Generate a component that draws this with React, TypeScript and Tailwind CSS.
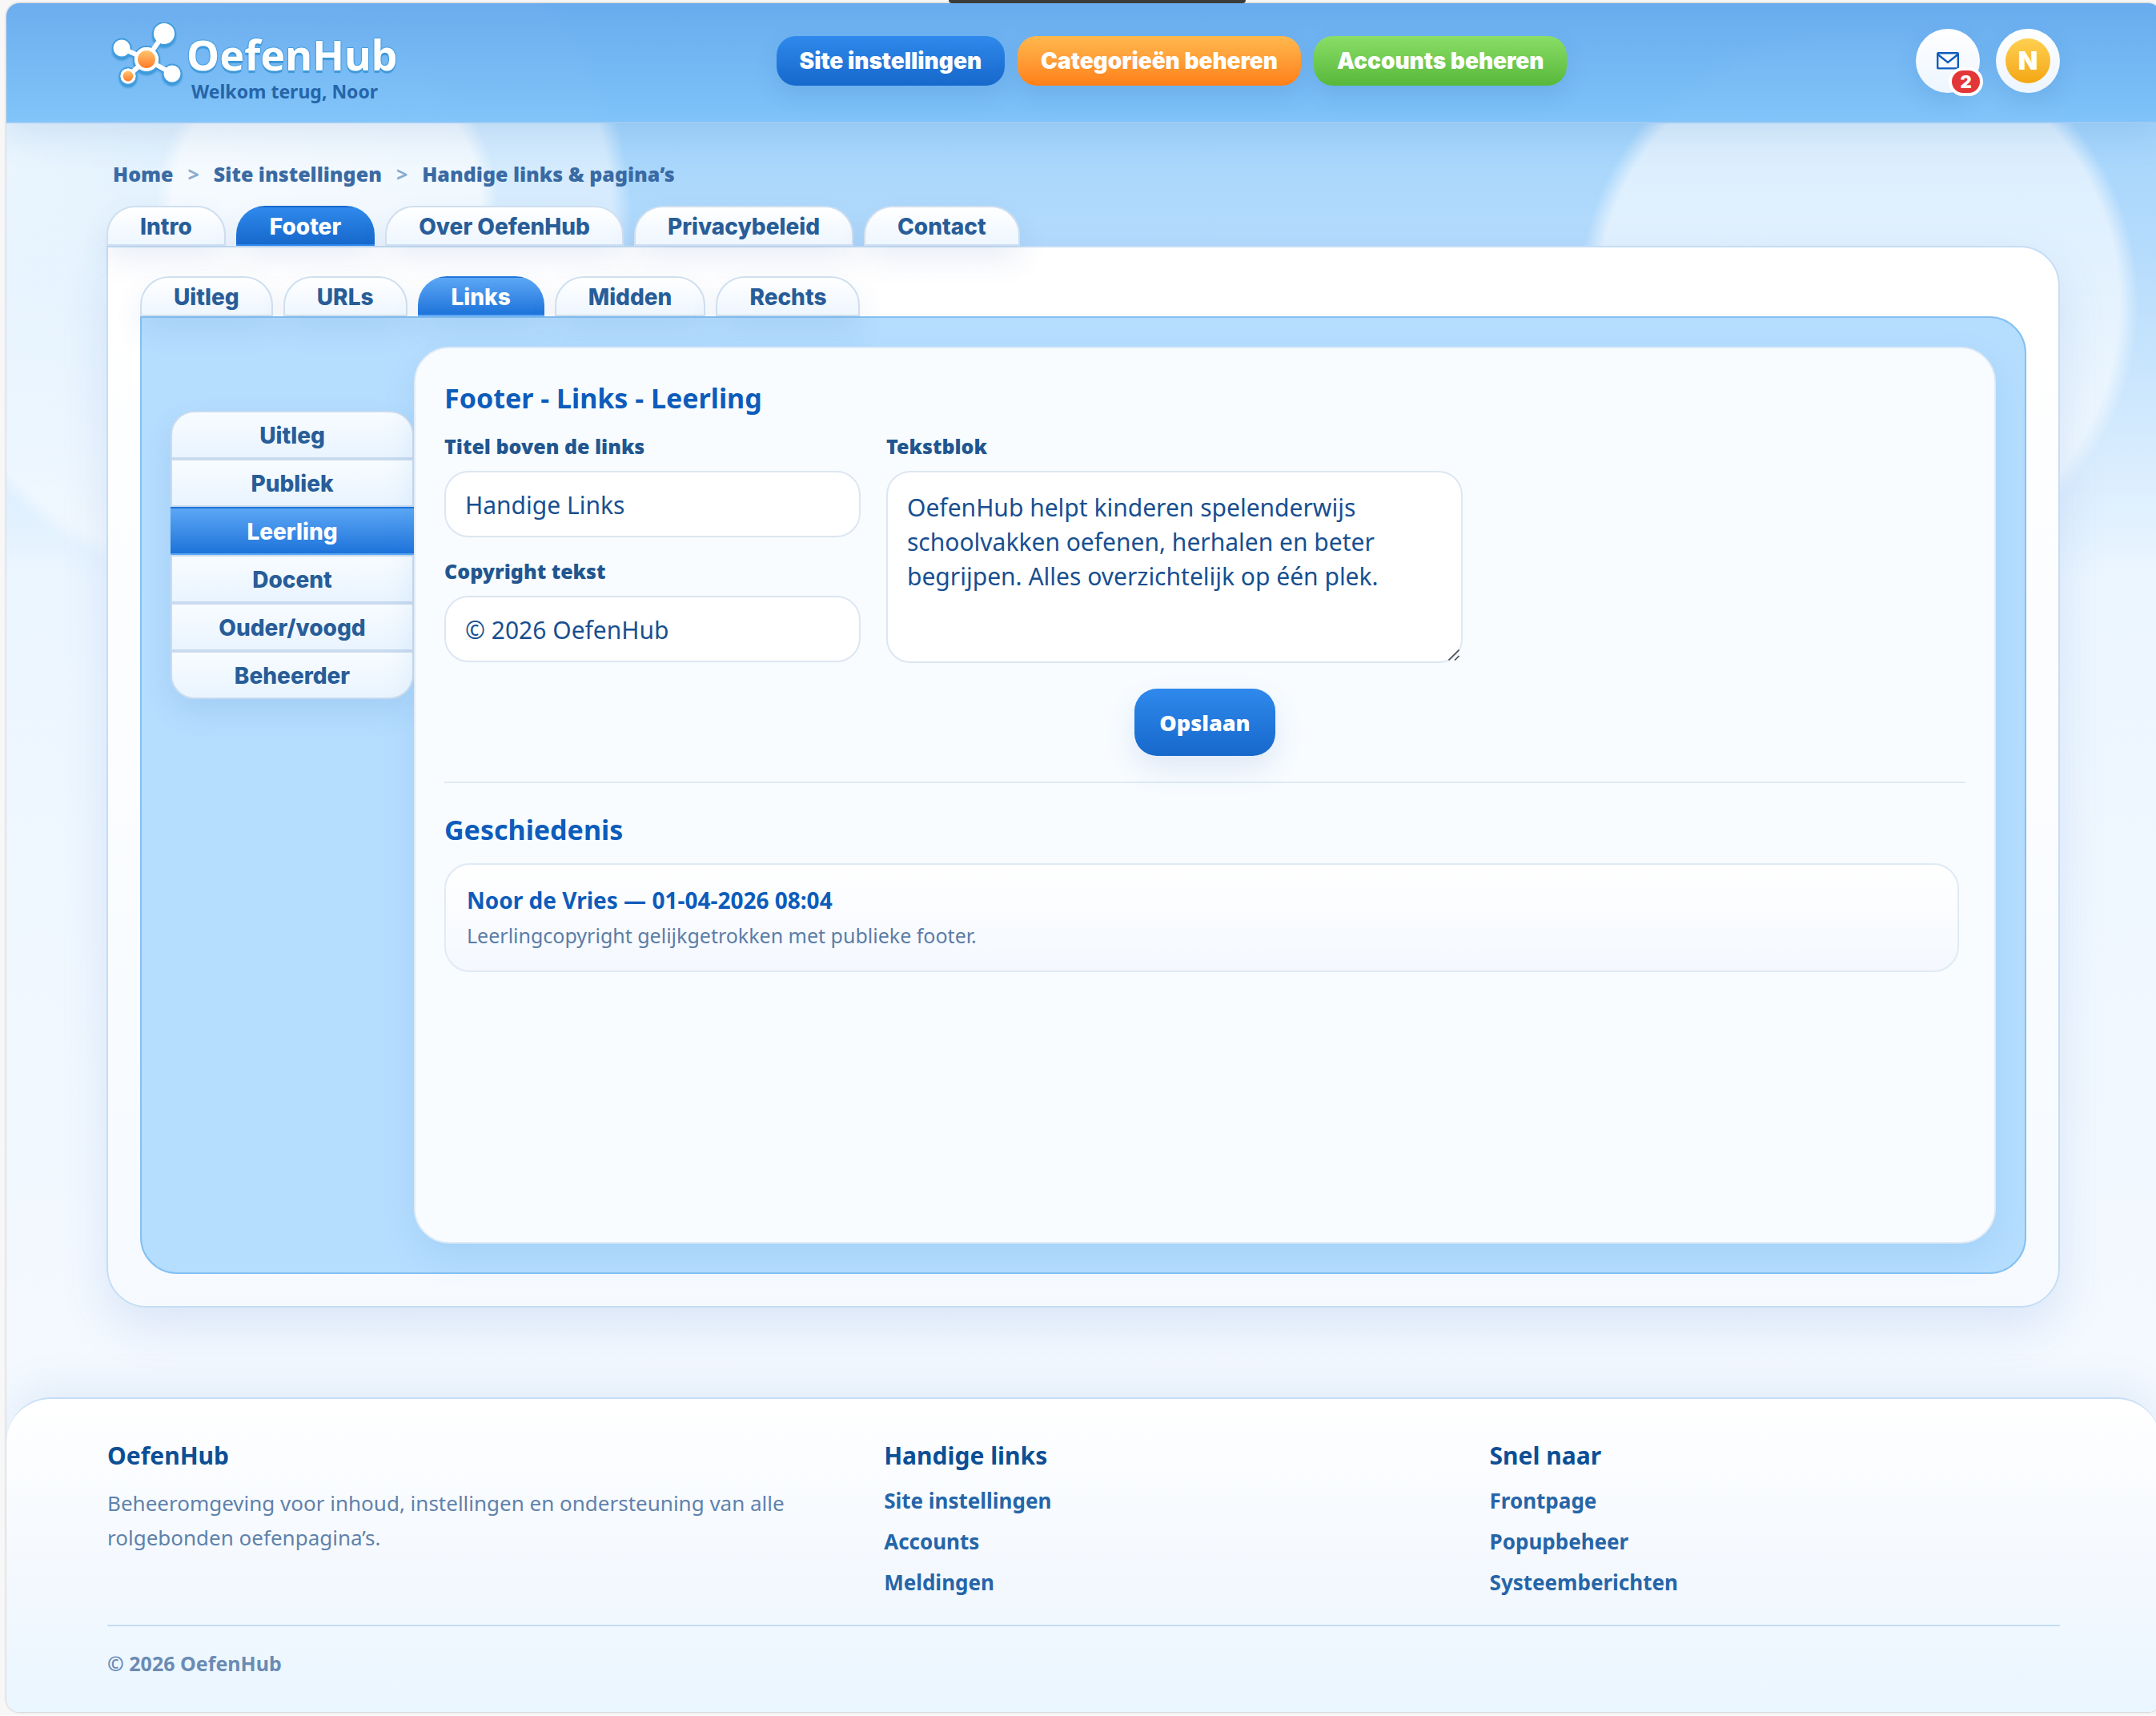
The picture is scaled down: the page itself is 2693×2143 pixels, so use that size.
import clsx from "clsx";
import { useState } from "react";

const mainTabs = ["Intro", "Footer", "Over OefenHub", "Privacybeleid", "Contact"];
const subTabs = ["Uitleg", "URLs", "Links", "Midden", "Rechts"];
const roles = ["Uitleg", "Publiek", "Leerling", "Docent", "Ouder/voogd", "Beheerder"];

const navItems = [
  { label: "Site instellingen", color: "from-[#2f89ec] to-[#1768cb]" },
  { label: "Categorieën beheren", color: "from-[#ffb84d] to-[#ff7f16]" },
  { label: "Accounts beheren", color: "from-[#8ade66] to-[#57b83b]" },
];

const footerColumns = [
  { title: "Handige links", links: ["Site instellingen", "Accounts", "Meldingen"] },
  { title: "Snel naar", links: ["Frontpage", "Popupbeheer", "Systeemberichten"] },
];

function LogoMark() {
  return (
    <svg width="90" height="84" viewBox="0 0 90 84" className="drop-shadow-[0_3px_1px_#3c97d8]" aria-hidden="true">
      <defs>
        <linearGradient id="core" x1="0" y1="0" x2="0" y2="1">
          <stop offset="0" stopColor="#ffc670" />
          <stop offset="1" stopColor="#ff7a2a" />
        </linearGradient>
      </defs>
      <g stroke="#449ddd" strokeWidth="2" fill="#fff">
        <circle cx="12" cy="32" r="11.5" />
        <circle cx="65" cy="14" r="14" />
        <circle cx="75" cy="64" r="11.5" />
        <circle cx="20" cy="67" r="10.5" />
        <circle cx="43" cy="46" r="16" />
      </g>
      <path d="M12 32 43 46 65 14M20 67 43 46 75 64" stroke="#fff" strokeWidth="6" fill="none" />
      <circle cx="43" cy="46" r="15" fill="#fff" />
      <circle cx="43" cy="46" r="11" fill="url(#core)" />
      <circle cx="20" cy="67" r="9.5" fill="#fff" />
      <circle cx="20" cy="67" r="6.5" fill="url(#core)" />
    </svg>
  );
}

function Header() {
  return (
    <header className="relative flex items-start border-b-2 border-[#9fcbf6] bg-linear-to-b from-[#66aaed]/95 to-[#7cc2f9]/95 px-[126px] shadow-[0_12px_44px_rgba(40,100,170,0.13)]">
      <div className="flex w-[400px] items-start pl-1.5 pt-6">
        <LogoMark />
        <div className="mt-[18px] pl-[3px]">
          <p className="text-[52px] font-bold leading-[44px] text-white [text-shadow:0_3px_1px_#3c97d8,1px_0_1px_#449ddd,-1px_0_1px_#449ddd,0_-1px_1px_#449ddd]">
            OefenHub
          </p>
          <p className="mt-2 pl-1.5 text-[23px] font-bold leading-8 text-[#2565a8]">Welkom terug, Noor</p>
        </div>
      </div>
      <nav className="mt-[41px] flex flex-1 justify-center gap-4">
        {navItems.map((item) => (
          <button
            key={item.label}
            type="button"
            className={clsx(
              "h-[62px] rounded-3xl bg-linear-to-b px-[29px] font-['Inter'] text-[28px] font-black leading-[62px] text-white shadow-[0_12px_28px_rgba(40,100,170,0.14)]",
              item.color,
            )}
          >
            {item.label}
          </button>
        ))}
      </nav>
      <div className="mb-9 mt-8 flex gap-5">
        <button
          type="button"
          aria-label="Berichten"
          className="relative flex size-20 items-center justify-center rounded-full bg-linear-to-b from-white to-[#edf5fe] shadow-[0_12px_28px_rgba(40,100,170,0.14)]"
        >
          <svg width="28" height="22" viewBox="0 0 28 22" fill="none" stroke="#0d5cbd" strokeWidth="2.4" aria-hidden="true">
            <rect x="1.2" y="1.2" width="25.6" height="19.2" rx="1" />
            <path d="M1.5 3 14 13 26.5 3" />
          </svg>
          <span className="absolute -bottom-1 -right-1 flex h-9 w-[43px] items-center justify-center rounded-full border-4 border-white bg-[#e33638] font-['Inter'] text-[22px] font-black leading-none text-white">
            2
          </span>
        </button>
        <button
          type="button"
          aria-label="Profiel"
          className="flex size-20 items-center justify-center rounded-full bg-linear-to-b from-white to-[#edf5fe] shadow-[0_12px_28px_rgba(40,100,170,0.14)]"
        >
          <span className="flex size-14 items-center justify-center rounded-full bg-linear-to-b from-[#ffd04f] to-[#f3a60a] font-['Inter'] text-[32px] font-black text-white">
            N
          </span>
        </button>
      </div>
    </header>
  );
}

type TabsProps = {
  items: string[];
  active: string;
  activeClass: string;
  onSelect: (item: string) => void;
};

function Tabs({ items, active, activeClass, onSelect }: TabsProps) {
  return (
    <div role="tablist" className="flex gap-[13px]">
      {items.map((item) => (
        <button
          key={item}
          type="button"
          role="tab"
          aria-selected={item === active}
          onClick={() => onSelect(item)}
          className={clsx(
            "h-[50px] rounded-t-[36px] border-2 bg-linear-to-b px-10 pt-0.5 font-['Inter'] text-[28px] font-extrabold leading-[44px] shadow-[0_16px_36px_rgba(40,90,170,0.1)]",
            item === active
              ? clsx("border-transparent text-white", activeClass)
              : "border-[#cfdfef] from-white to-[#eef6ff] text-[#285d98]",
          )}
        >
          {item}
        </button>
      ))}
    </div>
  );
}

function SideMenu({ active, onSelect }: { active: string; onSelect: (role: string) => void }) {
  return (
    <nav className="mt-20 flex w-[304px] shrink-0 flex-col self-start rounded-[30px] shadow-[0_16px_36px_rgba(40,100,180,0.12)]">
      {roles.map((role) => (
        <button
          key={role}
          type="button"
          onClick={() => onSelect(role)}
          className={clsx(
            "h-[60px] border-2 bg-linear-to-b pt-0.5 font-['Inter'] text-[28px] font-extrabold leading-[54px] first:rounded-t-[30px] last:rounded-b-[30px]",
            role === active
              ? "border-transparent from-[#5ba7f5] to-[#1c73da] text-white"
              : "border-[#c9dbee] from-[#f8fcff] to-[#e9f4ff] text-[#285d98]",
          )}
        >
          {role}
        </button>
      ))}
    </nav>
  );
}

const fieldClass =
  "rounded-[30px] border-2 border-[#dde6f2] bg-white px-6 text-[30px] text-[#184f90] outline-none";
const labelClass = "text-[25px] font-black leading-9 text-[#22568f]";
const headingClass = "text-[34px] font-bold leading-[44px] text-[#0d5cbb]";

function FooterForm({ role }: { role: string }) {
  return (
    <section className="relative min-h-[1120px] flex-1 rounded-[44px] border-2 border-[#e0ebf6] bg-[#f8fcff] px-9 pt-10 shadow-[0_16px_40px_rgba(60,130,210,0.12)]">
      <h1 className={headingClass}>Footer - Links - {role}</h1>
      <form onSubmit={(e) => e.preventDefault()}>
        <div className="mt-5 flex gap-8">
          <div className="flex w-[520px] flex-col gap-6">
            <div className="flex flex-col gap-[13px]">
              <label htmlFor="title" className={labelClass}>
                Titel boven de links
              </label>
              <input id="title" defaultValue="Handige Links" className={clsx(fieldClass, "h-[83px] pt-0.5")} />
            </div>
            <div className="flex flex-col gap-[13px]">
              <label htmlFor="copyright" className={labelClass}>
                Copyright tekst
              </label>
              <input id="copyright" defaultValue="© 2026 OefenHub" className={clsx(fieldClass, "h-[83px] pt-0.5")} />
            </div>
          </div>
          <div className="flex w-[720px] flex-col gap-[13px]">
            <label htmlFor="text" className={labelClass}>
              Tekstblok
            </label>
            <div className="relative flex">
              <textarea
                id="text"
                defaultValue="OefenHub helpt kinderen spelenderwijs schoolvakken oefenen, herhalen en beter begrijpen. Alles overzichtelijk op één plek."
                className={clsx(fieldClass, "h-[240px] w-full resize-none py-[22px] leading-[43px]")}
              />
              <svg
                width="14"
                height="14"
                viewBox="0 0 14 14"
                stroke="#4a4f55"
                strokeWidth="1.6"
                className="pointer-events-none absolute bottom-[3px] right-1"
                aria-hidden="true"
              >
                <path d="M0.5 13.5 13.5 0.5M8 13.5 13.5 8" />
              </svg>
            </div>
          </div>
        </div>
        <div className="mt-8 flex justify-center">
          <button
            type="submit"
            className="h-[84px] rounded-[28px] bg-linear-to-b from-[#2f89ec] to-[#1768cb] px-[31px] pt-0.5 text-[27px] font-black text-white shadow-[0_16px_36px_rgba(40,90,180,0.12)]"
          >
            Opslaan
          </button>
        </div>
      </form>
      <div className="mt-8 border-t-2 border-[#e0eaf5] pt-9">
        <h2 className={headingClass}>Geschiedenis</h2>
        <article className="mr-2 mt-5 flex flex-col gap-2 rounded-[32px] border-2 border-[#e0eaf5] bg-linear-to-b from-white to-[#f4f8fe] p-[26px]">
          <h3 className="text-[28px] font-bold leading-9 text-[#0d5cbb]">Noor de Vries — 01-04-2026 08:04</h3>
          <p className="text-[25px] leading-9 text-[#5b7da6]">Leerlingcopyright gelijkgetrokken met publieke footer.</p>
        </article>
      </div>
    </section>
  );
}

function PageFooter() {
  return (
    <footer className="rounded-t-[56px] border-t-2 border-[#c5ddf5] bg-linear-to-b from-white via-[#f5f9fe] to-[#eaf6ff] px-[126px] pb-[43px] pt-[49px] shadow-[0_-16px_48px_rgba(50,110,190,0.09)]">
      <div className="grid grid-cols-[1.3fr_1fr_1fr] gap-11">
        <div>
          <h2 className="text-[30px] font-bold leading-[44px] text-[#0c4f95]">OefenHub</h2>
          <p className="mt-4 max-w-[880px] text-[26px] leading-[43px] text-[#5f82ab]">
            Beheeromgeving voor inhoud, instellingen en ondersteuning van alle rolgebonden oefenpagina’s.
          </p>
        </div>
        {footerColumns.map((column) => (
          <div key={column.title}>
            <h2 className="text-[30px] font-bold leading-[44px] text-[#0c4f95]">{column.title}</h2>
            <ul className="mt-4 flex flex-col gap-[15px]">
              {column.links.map((link) => (
                <li key={link}>
                  <a href="#" className="block text-[26px] font-bold leading-9 text-[#2565a8]">
                    {link}
                  </a>
                </li>
              ))}
            </ul>
          </div>
        ))}
      </div>
      <p className="mt-[35px] border-t-2 border-[#c5ddf5] pt-7 text-[25px] font-bold leading-9 text-[#6b8bb3]">
        © 2026 OefenHub
      </p>
    </footer>
  );
}

export default function App() {
  const [tab, setTab] = useState("Footer");
  const [subTab, setSubTab] = useState("Links");
  const [role, setRole] = useState("Leerling");

  return (
    <div className="relative overflow-hidden bg-[#f7f7f7] py-1 pl-2 font-['Noto_Sans','Open_Sans',sans-serif]">
      <div className="absolute left-[44%] top-0 h-1 w-[371px] rounded-b-lg bg-[#3b3b3b]" />
      <div className="-mr-1.5 overflow-hidden rounded-2xl bg-[radial-gradient(circle_at_400px_254px,rgba(255,255,255,0.65)_192px,transparent_214px),radial-gradient(circle_at_317px_276px,rgba(255,255,255,0.5)_440px,transparent_464px),radial-gradient(circle_at_2313px_374px,rgba(255,255,255,0.6)_326px,transparent_350px),radial-gradient(ellipse_at_0px_200px,rgba(255,255,255,0.5)_0px,transparent_600px),linear-gradient(#93cefb_0px,#b4dbfc_300px,#ecf6ff_720px,#f4f9ff_1740px)] shadow-[0_0_3px_rgba(0,0,0,0.3)]">
        <Header />
        <main className="pb-28 pl-[125px] pr-[126px] pt-[45px]">
          <nav className="mb-[22px] flex gap-[18px] pl-2 text-[25px] font-black leading-9 text-[#3a6aa3]">
            <a href="#">Home</a>
            <span className="font-bold text-[#8aabcf]">&gt;</span>
            <a href="#">Site instellingen</a>
            <span className="font-bold text-[#8aabcf]">&gt;</span>
            <a href="#">Handige links &amp; pagina’s</a>
          </nav>
          <Tabs items={mainTabs} active={tab} activeClass="from-[#2f89ec] to-[#1768cb]" onSelect={setTab} />
          <div className="rounded-[50px] rounded-tl-none border-2 border-[#c5ddf5] bg-linear-to-b from-white to-[#f6faff] px-10 pb-10 pt-9 shadow-[0_24px_60px_rgba(50,100,190,0.13)]">
            <Tabs items={subTabs} active={subTab} activeClass="from-[#5ba7f5] to-[#1c73da]" onSelect={setSubTab} />
            <div className="flex rounded-[46px] rounded-tl-none border-2 border-[#84c1f2] bg-[#b5ddfe] p-9">
              <SideMenu active={role} onSelect={setRole} />
              <FooterForm role={role} />
            </div>
          </div>
        </main>
        <PageFooter />
      </div>
    </div>
  );
}
